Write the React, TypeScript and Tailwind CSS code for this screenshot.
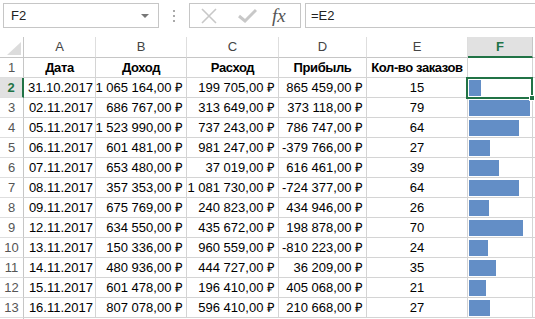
import React from 'react';

const rows: [string, string, string, string, number][] = [
  ['31.10.2017', '1 065 164,00 ₽', '199 705,00 ₽', '865 459,00 ₽', 15],
  ['02.11.2017', '686 767,00 ₽', '313 649,00 ₽', '373 118,00 ₽', 79],
  ['05.11.2017', '1 523 990,00 ₽', '737 243,00 ₽', '786 747,00 ₽', 64],
  ['06.11.2017', '601 481,00 ₽', '981 247,00 ₽', '-379 766,00 ₽', 27],
  ['07.11.2017', '653 480,00 ₽', '37 019,00 ₽', '616 461,00 ₽', 39],
  ['08.11.2017', '357 353,00 ₽', '1 081 730,00 ₽', '-724 377,00 ₽', 64],
  ['09.11.2017', '675 769,00 ₽', '240 823,00 ₽', '434 946,00 ₽', 26],
  ['12.11.2017', '634 550,00 ₽', '435 672,00 ₽', '198 878,00 ₽', 70],
  ['13.11.2017', '150 336,00 ₽', '960 559,00 ₽', '-810 223,00 ₽', 24],
  ['14.11.2017', '480 936,00 ₽', '444 727,00 ₽', '36 209,00 ₽', 35],
  ['15.11.2017', '601 478,00 ₽', '196 410,00 ₽', '405 068,00 ₽', 21],
  ['16.11.2017', '807 078,00 ₽', '596 410,00 ₽', '210 668,00 ₽', 27],
];

const cols = 'grid grid-cols-[24px_72px_91px_92px_88px_101px_65px_1fr]';
const cell = 'h-[20px] border-r border-b border-[#d4d4d4] flex items-center whitespace-nowrap overflow-hidden';

// excel data bar: shortest bar for min, full for max
const barWidth = (v: number) => Math.round(12 + ((v - 15) * 49) / 64);

export default function App() {
  return (
    <div className="w-[535px] h-[319px] overflow-hidden bg-white text-[13px] text-black font-['Liberation_Sans',Arial,sans-serif]">
      {/* Formula bar */}
      <div className="flex items-center h-[25px] mt-[3px] pl-[3px]">
        <div className="w-[156px] h-[25px] border border-[#c6c6c6] flex items-center justify-between pl-[7px] pr-[9px] text-[#222]">
          <span>F2</span>
          <span className="w-0 h-0 border-l-[4px] border-r-[4px] border-t-[4px] border-l-transparent border-r-transparent border-t-[#777]" />
        </div>
        <div className="w-[30px] flex flex-col items-center gap-[3px]">
          <span className="w-[2px] h-[2px] bg-[#aaa]" />
          <span className="w-[2px] h-[2px] bg-[#aaa]" />
          <span className="w-[2px] h-[2px] bg-[#aaa]" />
        </div>
        <div className="w-[112px] h-[25px] border border-[#c6c6c6] flex items-center pl-[11px] gap-[21px]">
          <svg width="16" height="16" viewBox="0 0 16 16">
            <path d="M1 1 L15 15 M15 1 L1 15" stroke="#c8c8c8" strokeWidth="1.6" fill="none" />
          </svg>
          <svg width="19" height="15" viewBox="0 0 19 15">
            <path d="M1 8 L7 13 L18 2" stroke="#c8c8c8" strokeWidth="3" fill="none" />
          </svg>
          <span className="italic text-[19px] leading-none text-[#555] font-['Liberation_Serif',serif] -ml-[6px]">fx</span>
        </div>
        <div className="flex-1 h-[25px] ml-[4px] border border-r-0 border-[#c6c6c6] flex items-center pl-[5px] text-[#222]">
          =E2
        </div>
      </div>

      {/* Column headers */}
      <div className={`${cols} mt-[9px]`}>
        <div className="h-[21px] border-r border-b border-[#c6c6c6] relative">
          <svg className="absolute right-[2px] bottom-[2px]" width="14" height="13" viewBox="0 0 14 13">
            <polygon points="14,0 14,13 0,13" fill="#dcdcdc" />
          </svg>
        </div>
        {['A', 'B', 'C', 'D', 'E'].map((c) => (
          <div key={c} className="h-[21px] border-r border-b border-r-[#dedede] border-b-[#c6c6c6] flex items-center justify-center text-[#444]">
            {c}
          </div>
        ))}
        <div className="h-[21px] bg-[#e1e1e1] border-r border-r-[#c6c6c6] border-b-2 border-b-[#217346] flex items-center justify-center font-bold text-[#217346]">
          F
        </div>
        <div className="h-[21px] border-b border-[#c6c6c6]" />
      </div>

      {/* Header row */}
      <div className={cols}>
        <div className="h-[20px] border-r border-b border-r-[#c6c6c6] border-b-[#dedede] flex items-center justify-center text-[#555]">1</div>
        {['Дата', 'Доход', 'Расход', 'Прибыль', 'Кол-во заказов'].map((h) => (
          <div key={h} className={`${cell} justify-center font-bold tracking-[-0.4px]`}>
            {h}
          </div>
        ))}
        <div className={cell} />
        <div className="h-[20px] border-b border-[#d4d4d4]" />
      </div>

      {/* Data rows */}
      {rows.map((r, i) => {
        const selected = i === 0;
        return (
          <div key={i} className={cols}>
            <div
              className={
                selected
                  ? 'h-[20px] bg-[#e1e1e1] border-r-2 border-r-[#217346] border-b border-b-[#dedede] flex items-center justify-center font-bold text-[#217346]'
                  : 'h-[20px] border-r border-b border-r-[#c6c6c6] border-b-[#dedede] flex items-center justify-center text-[#555]'
              }
            >
              {i + 2}
            </div>
            <div className={`${cell} justify-end pr-[2px]`}>{r[0]}</div>
            <div className={`${cell} justify-end pr-[3px]`}>{r[1]}</div>
            <div className={`${cell} justify-end pr-[3px]`}>{r[2]}</div>
            <div className={`${cell} justify-end pr-[3px]`}>{r[3]}</div>
            <div className={`${cell} justify-center`}>{r[4]}</div>
            <div className={`${cell} relative !overflow-visible pl-[1px]`}>
              <div className="h-[16px] bg-[#638ec6]" style={{ width: barWidth(r[4]) }} />
              {selected && (
                <div className="absolute -left-[2px] -top-[1px] w-[67px] h-[22px] border-2 border-[#217346] z-10">
                  <div className="absolute -right-[4px] -bottom-[4px] w-[6px] h-[6px] bg-[#217346] border border-white" />
                </div>
              )}
            </div>
            <div className="h-[20px] border-b border-[#d4d4d4]" />
          </div>
        );
      })}
      <div className={cols}>
        <div className="h-[20px] border-r border-[#c6c6c6]" />
      </div>
    </div>
  );
}
